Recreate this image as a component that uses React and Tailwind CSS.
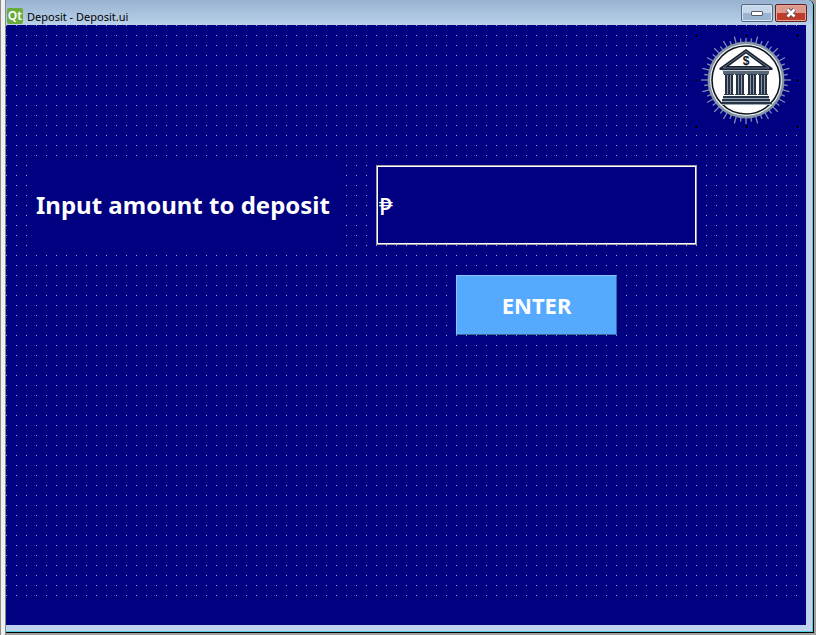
import React from "react";

const rays = Array.from({ length: 48 }, (_, i) => {
  const angle = (i * Math.PI * 2) / 48;
  const outer = i % 2 ? 42 : 45;
  return {
    x1: 52 + Math.cos(angle) * 37,
    y1: 47 + Math.sin(angle) * 37,
    x2: 52 + Math.cos(angle) * outer,
    y2: 47 + Math.sin(angle) * outer,
  };
});

const handles = [
  [2, 2], [52, 2], [103, 2],
  [2, 47], [103, 47],
  [2, 93], [52, 93], [103, 93],
];

function BankLogo() {
  return (
    <svg className="h-24 w-[106px] bg-[#000080]" viewBox="0 0 106 96" role="img" aria-label="Bank">
      {rays.map((r, i) => (
        <line key={i} {...r} stroke="#7c8cb4" strokeWidth="1.3" />
      ))}
      {handles.map(([x, y]) => (
        <g key={`${x}-${y}`}>
          <rect x={x - 2} y={y - 2} width="5" height="5" fill="#0000b8" />
          <rect x={x - 1} y={y - 1} width="3" height="3" fill="#000010" />
        </g>
      ))}
      <circle cx="52" cy="47" r="38.5" fill="#8294a4" />
      <circle cx="52" cy="47" r="36" fill="#e8eef2" />
      <circle cx="52" cy="47" r="34" fill="#fff" stroke="#10141e" strokeWidth="1.6" />
      <path d="M52 16 L78.5 35 V37 H25.5 V35 Z" fill="#182232" />
      <path d="M52 18.3 L75 35 H29 Z" fill="none" stroke="#8795a3" strokeWidth="0.7" />
      <path d="M52 20.5 L69 33 H35 Z" fill="#fff" />
      <text x="52" y="31.5" textAnchor="middle" fontSize="12" fontWeight="700" fontFamily="Liberation Sans, sans-serif" fill="#10141e">$</text>
      <path d="M28 37h48v1h-48z" fill="#c4ccd4" />
      <path d="M29 38h46v3h-46z" fill="#586879" />
      {[31, 42, 54, 65].map((x) => (
        <g key={x}>
          <path d={`M${x - 1} 41h10v1h-10zM${x - 1} 61h10v1h-10z`} fill="#303d4d" />
          <path d={`M${x} 42h8v19h-8z`} fill="#8c99a8" />
          <path d={`M${x} 42h2v19h-2zM${x + 3} 42h2v19h-2zM${x + 6} 42h2v19h-2z`} fill="#263244" />
        </g>
      ))}
      <path d="M29 63h46v2h-46zM28 66h48v2h-48zM27 69h51v2h-51z" fill="#263448" />
      <path d="M29 65h46v1h-46zM28 68h48v1h-48zM27 71h51v1h-51z" fill="#9ca8b2" />
    </svg>
  );
}

export default function App() {
  return (
    <div className="flex h-screen min-h-[440px] bg-[#a0a0a0] font-['Noto_Sans','Open_Sans',sans-serif]">
      <div className="w-[6px] shrink-0 border-x border-l-[#8c8c8c] border-r-[#808890] bg-[#f0f0f0]" />
      <div className="mb-[2px] mr-[2px] flex min-w-0 flex-1 flex-col rounded-tr-md border-b border-r border-black bg-[#bfd2ee]">
        <div className="flex min-h-0 flex-1 flex-col rounded-tr-md border-b border-r border-[#50d0dc]">
          <header className="flex h-[25px] shrink-0 items-end rounded-tr-md bg-gradient-to-b from-[#98b2d0] to-[#b9d1ea] pr-[5px]">
            <div className="mb-px ml-px flex h-4 w-4 items-center justify-center rounded-xs bg-[#6aac3c] text-[12px] font-semibold leading-4 text-white">Qt</div>
            <h1 className="ml-1 text-[11px] leading-4 text-black">Deposit - Deposit.ui</h1>
            <div className="mb-[3px] ml-auto flex gap-[2px]">
              <button type="button" aria-label="Minimize" className="flex h-[18px] w-8 items-center justify-center rounded-xs border border-[#536780] bg-linear-to-b from-[#c5d7eb] from-50% to-[#9bb5d1] to-50% shadow-[inset_0_0_0_1px_#d6e4f2]">
                <svg width="12" height="6" viewBox="0 0 12 6"><rect x="0.5" y="1.5" width="11" height="4" rx="0.5" fill="#fff" stroke="#535968" /></svg>
              </button>
              <button type="button" aria-label="Close" className="flex h-[18px] w-8 items-center justify-center rounded-xs border border-[#602020] bg-linear-to-b from-[#dc9a8d] from-50% to-[#bd3c2c] to-50% shadow-[inset_0_0_0_1px_#e4a496]">
                <svg width="12" height="10" viewBox="0 0 12 10"><path d="M2.5 1.5l7 7M9.5 1.5l-7 7" stroke="#574954" strokeWidth="4.4" /><path d="M2.5 1.5l7 7M9.5 1.5l-7 7" stroke="#fff" strokeWidth="2.6" /></svg>
              </button>
            </div>
          </header>
          <div className="mb-[6px] mr-[6px] flex min-h-0 flex-1 flex-col bg-[#000080]">
            <main className="min-h-0 flex-1 bg-[linear-gradient(to_right,transparent_1px,#000080_1px),linear-gradient(to_bottom,#a0a0d8_1px,#000080_1px)] bg-size-[10px_10px]">
              <div className="flex justify-end pr-[6px] pt-2">
                <BankLogo />
              </div>
              <form className="ml-[21px] mt-[27px] flex items-start gap-[30px]" onSubmit={(e) => e.preventDefault()}>
                <label htmlFor="amount" className="flex h-[98px] w-[319px] items-center bg-[#000080] pl-[9px] text-[24px] font-bold whitespace-nowrap text-white">
                  Input amount to deposit
                </label>
                <div className="mt-[9px] flex w-[321px] flex-col items-center gap-[30px]">
                  <input id="amount" type="text" defaultValue="₱" className="h-20 w-full border border-[#a0a0a0] bg-[#000080] px-[2px] text-[24px] font-medium text-white shadow-[inset_0_0_0_1px_#fff] outline-none" />
                  <button type="submit" className="h-[60px] w-[161px] border border-b-[#386c98] border-l-[#88c4ff] border-r-[#386c98] border-t-[#88c4ff] bg-[#55aaff] text-[22px] font-bold text-white">ENTER</button>
                </div>
              </form>
            </main>
            <footer className="h-6 shrink-0 bg-[#000080]" />
          </div>
        </div>
      </div>
    </div>
  );
}
